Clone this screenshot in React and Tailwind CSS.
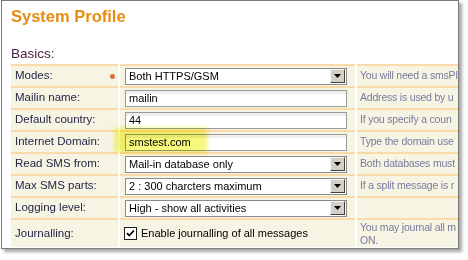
import React from "react";

const rows = [
  { label: "Modes:", kind: "select", value: "Both HTTPS/GSM", dot: true, help: "You will need a smsPl" },
  { label: "Mailin name:", kind: "text", value: "mailin", help: "Address is used by u" },
  { label: "Default country:", kind: "text", value: "44", help: "If you specify a coun" },
  { label: "Internet Domain:", kind: "text", value: "smstest.com", help: "Type the domain use" },
  { label: "Read SMS from:", kind: "select", value: "Mail-in database only", help: "Both databases must" },
  { label: "Max SMS parts:", kind: "select", value: "2 : 300 charcters maximum", help: "If a split message is r" },
  { label: "Logging level:", kind: "select", value: "High - show all activities", help: "" },
];

function SelectBox({ value }) {
  return (
    <div className="flex h-[17px] w-[222px] items-center border border-[#8a8a8a] bg-white pl-[3px] pr-px">
      <span className="flex-1 truncate leading-[15px] text-black">{value}</span>
      <span className="flex h-[14px] w-[15px] items-center justify-center border border-t-[#f4f4f4] border-l-[#f4f4f4] border-r-[#404040] border-b-[#404040] bg-[#d4d0c8]">
        <svg width="7" height="4" viewBox="0 0 7 4">
          <path d="M0 0h7L3.5 4z" fill="#000" />
        </svg>
      </span>
    </div>
  );
}

function TextBox({ value }) {
  return (
    <div className="flex h-[17px] w-[222px] items-center border border-[#9a9a9a] bg-white pl-[3px] shadow-[inset_0_3px_0_#efefef]">
      <span className="leading-[15px] text-black">{value}</span>
    </div>
  );
}

function Row({ row }) {
  return (
    <div className="flex h-[22px] gap-[2px]">
      <div className="flex w-[107px] items-center justify-between border-t-2 border-[#fbd9a8] bg-[#f6f4e3] pl-[4px] pr-[3px] text-[11.5px] text-[#262648]">
        <span>{row.label}</span>
        {row.dot && (
          <span className="h-[5px] w-[5px] rounded-full bg-[#d0703c] shadow-[inset_0_0_1px_#f0a070]" />
        )}
      </div>
      <div className="flex w-[235px] items-center border-t-2 border-[#fbd9a8] bg-[#f6f4e3] pl-[5px]">
        {row.kind === "select" ? <SelectBox value={row.value} /> : <TextBox value={row.value} />}
      </div>
      <div className="flex flex-1 items-center overflow-hidden whitespace-nowrap border-t-2 border-[#fbd9a8] bg-[#f6f4e3] pl-[3px] text-[10.5px] tracking-[-0.2px] text-[#7a7a9e]">
        {row.help}
      </div>
    </div>
  );
}

export default function App() {
  return (
    <div className="h-[260px] w-[468px] bg-white" style={{ fontFamily: '"Liberation Sans", Arial, sans-serif' }}>
      <div className="relative ml-px h-[249px] w-[458px] overflow-hidden border border-[#7c7c7c] bg-white pl-[9px] text-[11px] shadow-[3px_3px_3px_rgba(0,0,0,0.35)]">
        <div className="h-[44px] pt-[4px] text-[16.5px] font-bold leading-[22px] text-[#e88b12]">
          System Profile
        </div>
        <div className="h-[19px] text-[13.5px] leading-[18px] text-[#4c2244]">Basics:</div>
        <div className="flex flex-col">
          {rows.map((row) => (
            <Row key={row.label} row={row} />
          ))}
          <div className="flex h-[29px] gap-[2px]">
            <div className="flex w-[107px] items-center border-t-2 border-[#fbd9a8] bg-[#f6f4e3] pl-[4px] text-[11.5px] text-[#262648]">
              Journalling:
            </div>
            <div className="flex w-[235px] items-center gap-[4px] border-t-2 border-[#fbd9a8] bg-[#f6f4e3] pl-[4px]">
              <span className="flex h-[13px] w-[13px] items-center justify-center border border-[#1e1e1e] bg-white">
                <svg width="9" height="9" viewBox="0 0 9 9">
                  <path d="M1 4.2l2.2 2.3L8 1.5" fill="none" stroke="#000" strokeWidth="1.8" />
                </svg>
              </span>
              <span className="text-black">Enable journalling of all messages</span>
            </div>
            <div className="flex flex-1 flex-col justify-center overflow-hidden whitespace-nowrap border-t-2 border-[#fbd9a8] bg-[#f6f4e3] pl-[3px] text-[10.5px] leading-[13px] tracking-[-0.2px] text-[#7a7a9e]">
              <span>You may journal all m</span>
              <span>ON.</span>
            </div>
          </div>
        </div>
        <div className="pointer-events-none absolute left-[113px] top-[127px] h-[25px] w-[92px] bg-[#f7f77a] mix-blend-multiply blur-[2px]" />
      </div>
    </div>
  );
}
